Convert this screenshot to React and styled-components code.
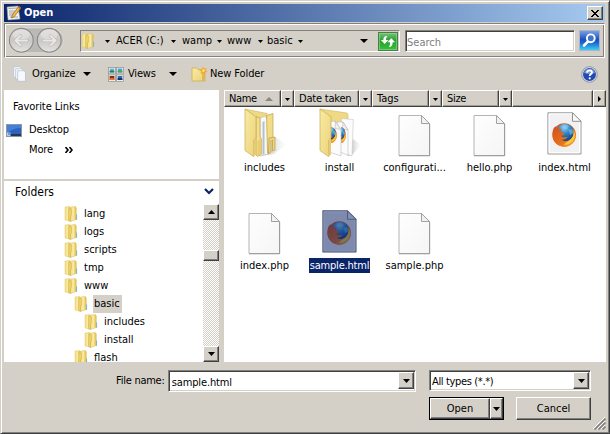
import React from "react";
import styled, { createGlobalStyle, css } from "styled-components";

const face = "#d4d0c8";

const Global = createGlobalStyle`
  * { box-sizing: border-box; }
  body { margin: 0; background: ${face}; overflow: hidden; }
  svg { display: block; flex: none; }
`;

const raised = css`
  background: ${face};
  color: #000;
  border: 1px solid;
  border-color: #fff #404040 #404040 #fff;
  box-shadow: inset -1px -1px 0 #808080;
`;
const sunken = css`
  border: 1px solid;
  border-color: #808080 #fff #fff #808080;
  box-shadow: inset 1px 1px 0 #404040, inset -1px -1px 0 ${face};
`;

const Window = styled.main`
  width: 610px;
  height: 434px;
  padding: 3px 3px 0 3px;
  display: flex;
  flex-direction: column;
  background: ${face};
  border: 1px solid;
  border-color: ${face} #404040 #404040 ${face};
  box-shadow: inset 1px 1px 0 #fff, inset -1px -1px 0 #808080;
  font: 11px/14px "DejaVu Sans Condensed", "DejaVu Sans", sans-serif;
  font-stretch: condensed;
  color: #000;
  white-space: nowrap;
`;

const Text = styled.span`
  flex: none;
  width: ${(p) => (p.$w ? `${p.$w}px` : "auto")};
  letter-spacing: ${(p) => p.$ls || 0}px;
`;

const TitleBar = styled.header`
  height: 18px;
  flex: none;
  display: flex;
  align-items: center;
  padding: 0 2px 0 2px;
  margin-right: 1px;
  background: linear-gradient(90deg, #0a246a, #a6caf0);
  color: #fff;
  font-weight: bold;
`;
const TitleText = styled(Text)`
  flex: 1;
  margin-left: 2px;
`;
const CloseButton = styled.button`
  ${raised}
  width: 16px;
  height: 14px;
  padding: 0;
  display: flex;
  align-items: center;
  justify-content: center;
`;

const NavBar = styled.nav`
  height: 35px;
  flex: none;
  margin-top: 1px;
  margin-right: 1px;
  display: flex;
  align-items: flex-start;
  padding: 6px 0 0 3px;
  border: 1px solid;
  border-color: #808080 #fff #fff #808080;
  box-shadow: inset 1px 1px 0 #fff, inset -1px -1px 0 #808080;
`;
const History = styled.div`
  margin-top: -3px;
`;
const Address = styled.div`
  width: 320px;
  height: 22px;
  margin-left: 16px;
  display: flex;
  align-items: center;
  border: 1px solid;
  border-color: #808080 #fff #fff #808080;
`;
const AddressIcon = styled.div`
  width: 24px;
  display: flex;
`;
const Crumb = styled.div`
  display: flex;
  align-items: center;
  width: ${(p) => p.$w}px;
`;
const Spacer = styled.div`
  flex: 1;
`;
const RefreshSlot = styled.div`
  margin-left: 10px;
  margin-right: 1px;
`;
const SearchBox = styled.div`
  ${sunken}
  width: 170px;
  height: 22px;
  margin-left: 5px;
  padding: 5px 1px;
  background: #fff;
  color: #808080;
`;
const SearchButton = styled.div`
  margin-left: 4px;
`;

const Toolbar = styled.div`
  height: 32px;
  flex: none;
  display: flex;
  align-items: center;
  padding: 0 8px 0 9px;
`;
const Tool = styled.div`
  display: flex;
  align-items: center;
  width: ${(p) => p.$w}px;
`;
const ToolIcon = styled.div`
  width: ${(p) => p.$w}px;
`;

const Content = styled.section`
  height: 272px;
  flex: none;
  display: flex;
  gap: 5px;
`;
const Sidebar = styled.aside`
  width: 215px;
  display: flex;
  flex-direction: column;
  gap: 2px;
`;
const Favorites = styled.div`
  height: 89px;
  padding: 10px 0 0 9px;
  background: #fff;
`;
const FavoriteHeading = styled.div`
  height: 20px;
`;
const FavoriteLink = styled.div`
  display: flex;
  align-items: center;
  height: 20px;
  margin-left: -7px;
`;
const LinkIcon = styled.div`
  width: 23px;
`;
const Folders = styled.div`
  height: 181px;
  display: flex;
  flex-direction: column;
  background: #fff;
`;
const FoldersHeader = styled.div`
  height: 23px;
  flex: none;
  padding: 0 5px 2px 11px;
  display: flex;
  align-items: center;
  justify-content: space-between;
  font-size: 12px;
`;
const TreeArea = styled.div`
  flex: 1;
  display: flex;
  min-height: 0;
`;
const Tree = styled.div`
  flex: 1;
  overflow: hidden;
  padding-top: 1px;
`;
const TreeRow = styled.div`
  height: 18px;
  display: flex;
  align-items: center;
  padding-left: ${(p) => 60 + p.$depth * 10}px;
`;
const TreeLabel = styled.span`
  height: 18px;
  line-height: 18px;
  margin-left: 4px;
  padding: 0 2px 0 1px;
  background: ${(p) => (p.$active ? face : "transparent")};
`;
const ScrollBar = styled.div`
  width: 16px;
  display: flex;
  flex-direction: column;
  background: repeating-conic-gradient(#fff 0 25%, ${face} 0 50%) 0 0 / 2px 2px;
`;
const ScrollButton = styled.button`
  ${raised}
  width: 16px;
  height: 16px;
  padding: 0;
  display: flex;
  align-items: center;
  justify-content: center;
`;
const Thumb = styled.div`
  ${raised}
  height: 11px;
  margin: 30px 0 85px;
`;

const FilePane = styled.div`
  width: 382px;
  background: #fff;
`;
const ColumnRow = styled.div`
  display: flex;
  height: 17px;
`;
const Column = styled.div`
  width: ${(p) => p.$w}px;
  display: flex;
  align-items: center;
  justify-content: ${(p) => (p.$center ? "center" : "flex-start")};
  padding-left: ${(p) => (p.$center ? 0 : 4)}px;
  padding-top: 1px;
  background: ${face};
  border: 1px solid;
  border-color: #fff #404040 #404040 #fff;
  box-shadow: inset -1px -1px 0 #a09c94;
`;
const FileGrid = styled.div`
  display: grid;
  grid-template-columns: repeat(5, 75px);
  grid-auto-rows: 98px;
  padding: 0 0 0 3px;
`;
const FileItem = styled.div`
  display: flex;
  flex-direction: column;
  align-items: center;
`;
const FileIcon = styled.div`
  height: 53px;
  display: flex;
  align-items: flex-end;
  padding-bottom: ${(p) => p.$lift}px;
`;
const FileLabel = styled.span`
  height: 15px;
  line-height: 15px;
  padding: 0 1px;
  letter-spacing: ${(p) => (p.$selected ? -0.2 : 0)}px;
  color: ${(p) => (p.$selected ? "#fff" : "#000")};
  background: ${(p) => (p.$selected ? "#0a246a" : "transparent")};
`;

const Footer = styled.footer`
  flex: 1;
  display: flex;
  padding-top: 8px;
`;
const NameLabel = styled.label`
  width: 164px;
  padding: 4px 0 0 112px;
  letter-spacing: -0.25px;
`;
const Combo = styled.div`
  ${sunken}
  width: ${(p) => p.$w}px;
  height: ${(p) => p.$h}px;
  display: flex;
  align-items: stretch;
  justify-content: space-between;
  padding: ${(p) => (p.$h > 21 ? "1px 1px 2px 3px" : "1px 1px 1px 2px")};
  background: #fff;
`;
const ComboText = styled(Text)`
  padding-top: ${(p) => p.$top || 3}px;
`;
const ComboButton = styled.button`
  ${raised}
  width: 16px;
  padding: 0;
  display: flex;
  align-items: center;
  justify-content: center;
`;
const Choices = styled.div`
  width: 162px;
  margin-left: 13px;
`;
const Buttons = styled.div`
  display: flex;
  justify-content: space-between;
  margin-top: 6px;
`;
const OpenButton = styled.div`
  width: 75px;
  height: 23px;
  display: flex;
  border: 1px solid #000;
`;
const OpenPart = styled.button`
  ${raised}
  width: ${(p) => p.$w}px;
  padding: 0;
  font: inherit;
  display: flex;
  align-items: center;
  justify-content: center;
`;
const CancelButton = styled.button`
  ${raised}
  width: 75px;
  height: 23px;
  padding: 0;
  font: inherit;
`;
const Grip = styled.div`
  margin: 47px 0 0 2px;
`;

const Arrow = ({ w = 7, h = 4, up, color = "#000" }) => (
  <svg width={w} height={h} viewBox={`0 0 ${w} ${h}`}>
    <path d={up ? `M0 ${h}H${w}L${w / 2} 0Z` : `M0 0H${w}L${w / 2} ${h}Z`} fill={color} />
  </svg>
);

const HiddenSvg = styled.svg`
  position: absolute;
`;

const Defs = () => (
  <HiddenSvg width="0" height="0">
    <defs>
      <linearGradient id="gold" x1="0" x2="1" y1="0" y2="0">
        <stop offset="0" stopColor="#f3dd80" />
        <stop offset=".5" stopColor="#f9eba2" />
        <stop offset="1" stopColor="#dcb849" />
      </linearGradient>
      <linearGradient id="flap" x1="0" x2="1" y1="0" y2="1">
        <stop offset="0" stopColor="#f8eba2" />
        <stop offset="1" stopColor="#ecd27a" />
      </linearGradient>
      <linearGradient id="paper" x1="0" x2="1" y1="0" y2="1">
        <stop offset="0" stopColor="#fefefe" />
        <stop offset="1" stopColor="#f5f5f5" />
      </linearGradient>
      <radialGradient id="globe" cx=".45" cy=".2" r=".8">
        <stop offset="0" stopColor="#8fd8f7" />
        <stop offset=".45" stopColor="#2e83c8" />
        <stop offset="1" stopColor="#123c7c" />
      </radialGradient>
      <linearGradient id="fox" x1="0" x2="1" y1="0" y2="1">
        <stop offset="0" stopColor="#cf4f1a" />
        <stop offset=".6" stopColor="#e8701c" />
        <stop offset="1" stopColor="#f8b62c" />
      </linearGradient>
      <linearGradient id="orb" x1="0" x2="0" y1="0" y2="1">
        <stop offset="0" stopColor="#dddcda" />
        <stop offset=".5" stopColor="#c9c8c5" />
        <stop offset="1" stopColor="#e4e3e0" />
      </linearGradient>
      <linearGradient id="green" x1="0" x2="0" y1="0" y2="1">
        <stop offset="0" stopColor="#7cc47c" />
        <stop offset=".45" stopColor="#27a02e" />
        <stop offset="1" stopColor="#35c43b" />
      </linearGradient>
      <linearGradient id="blue" x1="0" x2="0" y1="0" y2="1">
        <stop offset="0" stopColor="#7fa4e6" />
        <stop offset=".45" stopColor="#1c50c0" />
        <stop offset=".6" stopColor="#1766d2" />
        <stop offset="1" stopColor="#43d4f5" />
      </linearGradient>
      <linearGradient id="shade" x1="0" x2="1" y1="0" y2="0">
        <stop offset="0" stopColor="#777" stopOpacity=".65" />
        <stop offset="1" stopColor="#ccc" stopOpacity="0" />
      </linearGradient>
    </defs>
  </HiddenSvg>
);

const SmallFolder = () => (
  <svg width="15" height="16" viewBox="0 0 15 16">
    <path d="M1 1 5.5.6 6.5 2V15L1 14Z" fill="url(#gold)" stroke="#e0c76c" strokeWidth=".5" />
    <path d="M6.5 1 11.5.6 12.3 2V13.5L6.5 15.5Z" fill="url(#gold)" stroke="#dabd5c" strokeWidth=".5" />
    <path d="M4.7 2 7.5 3V9L6.5 10V15.5L4.5 14.8Z" fill="#ecd06c" stroke="#c9a845" strokeWidth=".4" />
    <path d="M12 8.5H13.1V13.5L12 14Z" fill="#86b6c8" />
  </svg>
);

const AppIcon = () => (
  <svg width="16" height="16" viewBox="0 0 16 16">
    <path d="M1 2 12 1 14 14 2 15Z" fill="#f2f2ee" stroke="#999" strokeWidth=".6" />
    <path d="M2.5 3.5 11 3M3 6H9M3 8H8M3 10H7M4 12H12" stroke="#9a9a9a" strokeWidth=".9" />
    <path d="M13 1 15 3 8 12 5.5 13 6.3 10Z" fill="#eabc45" stroke="#805b1c" strokeWidth=".6" />
    <path d="M13 1 15 3 14 4.3 12 2.3Z" fill="#b54" />
  </svg>
);

const HistoryIcon = () => (
  <svg width="56" height="27" viewBox="0 0 56 27">
    <rect x=".5" y=".8" width="55" height="25" rx="12.5" fill="#bbb9b5" stroke="#dddbd6" />
    {[13.3, 41.2].map((x) => (
      <g key={x}>
        <circle cx={x} cy="13.3" r="11.9" fill="url(#orb)" stroke="#8b8986" strokeWidth="1.1" />
        <ellipse cx={x} cy="7.5" rx="8.5" ry="4.8" fill="#e6e5e3" opacity=".6" />
      </g>
    ))}
    <g fill="none" strokeLinecap="round" strokeLinejoin="round">
      <path d="M19 13.5H8M12.5 8.8 7.5 13.5 12.5 18.2M35.5 13.5H47M42.5 8.8 47.5 13.5 42.5 18.2" stroke="#b9b8b5" strokeWidth="3.2" />
      <path d="M19 13.5H8M12.5 8.8 7.5 13.5 12.5 18.2M35.5 13.5H47M42.5 8.8 47.5 13.5 42.5 18.2" stroke="#e9e8e6" strokeWidth="2" />
    </g>
  </svg>
);

const RefreshIcon = () => (
  <svg width="20" height="19" viewBox="0 0 20 19">
    <rect x=".5" y=".5" width="19" height="18" fill="url(#green)" stroke="#4b7d4b" />
    <rect x="1.5" y="1.5" width="17" height="16" fill="none" stroke="#9bd69b" strokeOpacity=".6" />
    <path d="M9.5 4C6.8 3.8 5.3 5 5.3 8H2.8L6.7 12 10.5 8H8C8 6.2 8.3 5.2 9.5 4ZM10.8 15C13.5 15 14.7 13.5 14.7 10.3H17.2L13.3 6.3 9.5 10.3H12C12 12.5 12 13.8 10.8 15Z" fill="#fff" />
  </svg>
);

const SearchIcon = () => (
  <svg width="21" height="21" viewBox="0 0 21 21">
    <rect x=".5" y=".5" width="20" height="20" fill="url(#blue)" stroke="#a9b5c9" />
    <path d="M5 15.5 9 11.5" stroke="#fff" strokeWidth="2.6" strokeLinecap="round" />
    <circle cx="11.8" cy="8.3" r="3.9" fill="#3f74cf" stroke="#fff" strokeWidth="1.9" />
  </svg>
);

const OrganizeIcon = () => (
  <svg width="15" height="16" viewBox="0 0 15 16">
    {[0, 2, 4].map((d) => (
      <path key={d} d={`M${0.7 + d} ${0.7 + d}H${7 + d}L${8.5 + d} ${2.2 + d}V${11.3 + d}H${0.7 + d}Z`} fill="#f7f9fb" stroke="#adbdce" strokeWidth=".7" />
    ))}
  </svg>
);

const ViewsIcon = () => (
  <svg width="16" height="15" viewBox="0 0 16 15">
    {[[0, 0, "#57b9dc", "#2f7d44"], [8, 0, "#4a9fdd", "#4faa37"], [0, 7.5, "#8d2219", "#df7b30"], [8, 7.5, "#3568b8", "#123268"]].map(([x, y, a, b]) => (
      <g key={`${x}-${y}`}>
        <rect x={x + 0.5} y={y + 0.5} width="7" height="6.3" fill="#fff" stroke="#8c8c8c" strokeWidth=".7" />
        <rect x={x + 1.6} y={y + 1.5} width="4.8" height="4.1" fill={a} />
        <path d={`M${x + 1.6} ${y + 5.6}V${y + 4}L${x + 4} ${y + 3.3} ${x + 6.4} ${y + 4.2}V${y + 5.6}Z`} fill={b} />
      </g>
    ))}
  </svg>
);

const NewFolderIcon = () => (
  <svg width="17" height="16" viewBox="0 0 17 16">
    <path d="M1 2H6L7 3.5H14V15H1Z" fill="url(#flap)" stroke="#d1ad48" strokeWidth=".8" />
    <path d="M11 6H14V15H11Z" fill="#dcb956" />
    <path d="M12 0 13 2.7 16 1.7 14.5 4.3 17 6 14 6.3 13.5 9 12 6.8 9.5 8 10.3 5.5 8 4.3 10.7 3.5Z" fill="#f5a832" />
    <circle cx="12.4" cy="4.6" r="1.3" fill="#ffe481" />
  </svg>
);

const HelpIcon = () => (
  <svg width="17" height="17" viewBox="0 0 17 17">
    <circle cx="8.5" cy="8.5" r="7.8" fill="#d7deeb" stroke="#7f8795" strokeWidth=".8" />
    <circle cx="8.5" cy="8.5" r="6.5" fill="#2549ae" />
    <path d="M3 7A5.7 5.7 0 0 1 14 7Q8.5 9 3 7Z" fill="#7592d6" />
    <path d="M6 6.8Q6.2 4.4 8.6 4.4 11 4.5 11 6.5C11 8 8.7 8.2 8.7 10" fill="none" stroke="#fff" strokeWidth="1.8" />
    <circle cx="8.7" cy="12.3" r="1.1" fill="#fff" />
  </svg>
);

const DesktopIcon = () => (
  <svg width="16" height="13" viewBox="0 0 16 13">
    <rect x=".5" y=".5" width="15" height="12" fill="#2d63bd" stroke="#8a97a8" />
    <path d="M1 1H15V4Q7 4 1 9Z" fill="#4580d8" />
    <rect x="1" y="10" width="14" height="2" fill="#26374f" />
    <path d="M1 8.5H4.5V12H1Z" fill="#b8d2e8" />
    <path d="M1.8 11.2 3.6 9.5M2.4 9.3H3.8V10.6" stroke="#2b6db0" strokeWidth=".7" fill="none" />
  </svg>
);

const Firefox = ({ x = 0, y = 0 }) => (
  <g transform={`translate(${x} ${y})`}>
    <circle cx="12" cy="12" r="11.7" fill="url(#fox)" />
    <circle cx="12.8" cy="9.8" r="9" fill="url(#globe)" />
    <path d="M10 3Q13 1 16 3L15 6 11 6ZM16 7 20 6 21 10 18 12Z" fill="#86cbed" opacity=".55" />
    <path d="M1.2 5.5 3 3.2 5 5.8 9.5 6 8 8.2 12 10.3 11 12.3 8.5 12.8Q10.5 15.2 15.5 13.8 13.5 17 9.5 16.8 13 19.5 18 16.5 22 13.5 21.5 6.5 24.8 12 22.5 17.5 18.5 24 11.5 23.8 4 23 .8 16.5-.8 10.5 1.2 5.5Z" fill="url(#fox)" />
    <path d="M21.3 6.5Q22 13.5 17.8 16.8 14 19.6 11.5 21.5 17 22.5 20.8 18 24.2 13 21.3 6.5Z" fill="#fbc63c" />
  </g>
);

const DocumentIcon = () => (
  <svg width="33" height="43" viewBox="0 0 33 43">
    <path d="M1 1.5H23.5L31.5 9.5V41.5H1Z" fill="url(#paper)" stroke="#b4b4b4" />
    <path d="M31.7 10V41.8H1" fill="none" stroke="#8f8f8f" strokeWidth=".8" />
    <path d="M23.5 1.5V9.5H31.5Z" fill="#f1f1f1" stroke="#999" strokeWidth=".9" />
  </svg>
);

const HtmlIcon = ({ selected }) => (
  <svg width="35" height="43" viewBox="0 0 35 43">
    <path d="M.9.8H25.5L34 9.3V42H.9Z" fill="#f1f1f3" stroke="#999" />
    <path d="M2.2 2H24.8L32.7 10.2V40.7H2.2Z" fill="none" stroke="#fff" />
    <path d="M25.5.8V9.3H34Z" fill="#fafafa" stroke="#888" strokeWidth=".9" />
    <Firefox x={5.3} y={11} />
    {selected && <path d="M.4.3H25.7L34.5 9V42.5H.4Z" fill="#0a246a" opacity=".5" />}
  </svg>
);

const FrontFlap = () => (
  <>
    <path d="M3 1 14 8.7V30L11.7 32V48.7L3 42.5Z" fill="url(#flap)" stroke="#c9ac55" strokeWidth=".7" />
    <path d="M11.7 32 14 30.5V46.5L11.7 48.7Z" fill="#e5cb76" />
  </>
);

const FilesFolderIcon = () => (
  <svg width="46" height="50" viewBox="0 0 46 50">
    <path d="M17 48 32 46 45 36 33 29Z" fill="url(#shade)" />
    <path d="M3 1 25 5.5V42H14Z" fill="#f0d985" stroke="#d0b562" strokeWidth=".6" />
    <path d="M18 10 23 8 26 12V46L18 48Z" fill="#f7f8f8" stroke="#b9b9b9" strokeWidth=".6" />
    <path d="M20.5 14 22.5 13V46L20.5 47Z" fill="#b4c2c8" />
    <path d="M24.5 7.5 31 5.5V31L27.5 32V43L25.5 45Z" fill="#f1dc88" stroke="#c0a044" strokeWidth=".7" />
    <path d="M27 30 33 29V42L30.5 43V32L29 33V44L26.5 46Z" fill="#edd57c" stroke="#b99843" strokeWidth=".7" />
    <path d="M14 8.5 18 10V29L19.5 31V46L15.5 48.5 14 47Z" fill="#f3df8d" stroke="#c0a044" strokeWidth=".7" />
    <path d="M15.5 33 19.5 30.5V46L15.5 48.5Z" fill="#e8cd76" />
    <FrontFlap />
  </svg>
);

const WebFolderIcon = () => (
  <svg width="46" height="50" viewBox="0 0 46 50">
    <path d="M31 48 36 46 44 37 36 31Z" fill="url(#shade)" />
    <path d="M3 1 30 5Q31 6 31 8V44H12Z" fill="#f0d985" stroke="#d0b562" strokeWidth=".6" />
    <path d="M24.5 10.5 36.3 11.5 35 48 24.5 44Z" fill="#fcfcfc" stroke="#c4c4c4" strokeWidth=".6" />
    <path d="M20 14 26 14 31 22V47.5L21 43Z" fill="#fbfbfb" stroke="#bdbdbd" strokeWidth=".6" />
    <path d="M26 14 25.5 21 31 22Z" fill="#efefef" stroke="#aaa" strokeWidth=".5" />
    <svg x="24" y="19" width="5" height="16" viewBox="12 0 12 24" preserveAspectRatio="none"><Firefox /></svg>
    <path d="M12 13 18.5 13.5 24 21.5V48L12 44Z" fill="#fbfbfb" stroke="#bdbdbd" strokeWidth=".6" />
    <path d="M18.5 13.5 18 20.5 24 21.5Z" fill="#efefef" stroke="#aaa" strokeWidth=".5" />
    <svg x="14" y="19" width="6" height="16" viewBox="12 0 12 24" preserveAspectRatio="none"><Firefox /></svg>
    <FrontFlap />
  </svg>
);

const icons = {
  doc: { art: <DocumentIcon />, lift: 3 },
  html: { art: <HtmlIcon />, lift: 5 },
  selected: { art: <HtmlIcon selected />, lift: 5 },
  files: { art: <FilesFolderIcon />, lift: 2 },
  web: { art: <WebFolderIcon />, lift: 2 },
};

const crumbs = [
  { name: "ACER (C:)", w: 66, text: 55 },
  { name: "wamp", w: 45, text: 35 },
  { name: "www", w: 40, text: 31 },
  { name: "basic", w: 40, text: 31 },
];
const tree = [
  ["lang", 0], ["logs", 0], ["scripts", 0], ["tmp", 0], ["www", 0],
  ["basic", 1], ["includes", 2], ["install", 2], ["flash", 1],
];
const files = [
  ["includes", "files"], ["install", "web"], ["configurati...", "doc"], ["hello.php", "doc"], ["index.html", "html"],
  ["index.php", "doc"], ["sample.html", "selected"], ["sample.php", "doc"],
];

export default function App() {
  return (
    <>
      <Global />
      <Defs />
      <Window>
        <TitleBar>
          <AppIcon />
          <TitleText>Open</TitleText>
          <CloseButton aria-label="Close">
            <svg width="8" height="7" viewBox="0 0 8 7" shapeRendering="crispEdges">
              <path d="M0 0H2V1H3V2H5V1H6V0H8V1H7V2H6V3H5V4H6V5H7V6H8V7H6V6H5V5H3V6H2V7H0V6H1V5H2V4H3V3H2V2H1V1H0Z" />
            </svg>
          </CloseButton>
        </TitleBar>
        <NavBar>
          <History><HistoryIcon /></History>
          <Address>
            <AddressIcon><SmallFolder /></AddressIcon>
            <Crumb $w={11}><Arrow w={5} h={3} /></Crumb>
            {crumbs.map((c) => (
              <Crumb key={c.name} $w={c.w}>
                <Text $w={c.text}>{c.name}</Text>
                <Arrow w={5} h={3} />
              </Crumb>
            ))}
            <Spacer />
            <Arrow w={8} h={4} />
            <RefreshSlot><RefreshIcon /></RefreshSlot>
          </Address>
          <SearchBox><Text>Search</Text></SearchBox>
          <SearchButton><SearchIcon /></SearchButton>
        </NavBar>
        <Toolbar>
          <Tool $w={95}>
            <ToolIcon $w={19}><OrganizeIcon /></ToolIcon>
            <Text $w={51} $ls={-0.1}>Organize</Text>
            <Arrow w={8} />
          </Tool>
          <Tool $w={83}>
            <ToolIcon $w={20}><ViewsIcon /></ToolIcon>
            <Text $w={41} $ls={-0.2}>Views</Text>
            <Arrow w={8} />
          </Tool>
          <Tool $w={90}>
            <ToolIcon $w={19}><NewFolderIcon /></ToolIcon>
            <Text $ls={-0.1}>New Folder</Text>
          </Tool>
          <Spacer />
          <HelpIcon />
        </Toolbar>
        <Content>
          <Sidebar>
            <Favorites>
              <FavoriteHeading><Text $ls={-0.1}>Favorite Links</Text></FavoriteHeading>
              <FavoriteLink>
                <LinkIcon><DesktopIcon /></LinkIcon>
                <Text $ls={-0.15}>Desktop</Text>
              </FavoriteLink>
              <FavoriteLink>
                <LinkIcon />
                <Text $w={36} $ls={-0.15}>More</Text>
                <svg width="8" height="6" viewBox="0 0 8 6"><path d="M.5 0 3 3 .5 6M4.5 0 7 3 4.5 6" fill="none" stroke="#000" strokeWidth="1.6" /></svg>
              </FavoriteLink>
            </Favorites>
            <Folders>
              <FoldersHeader>
                <Text>Folders</Text>
                <svg width="10" height="7" viewBox="0 0 10 7"><path d="M1 1 5 5 9 1" fill="none" stroke="#0a246a" strokeWidth="2.2" /></svg>
              </FoldersHeader>
              <TreeArea>
                <Tree>
                  {tree.map(([name, depth]) => (
                    <TreeRow key={name} $depth={depth}>
                      <SmallFolder />
                      <TreeLabel $active={name === "basic"}>{name}</TreeLabel>
                    </TreeRow>
                  ))}
                </Tree>
                <ScrollBar>
                  <ScrollButton aria-label="Scroll up"><Arrow up /></ScrollButton>
                  <Thumb />
                  <ScrollButton aria-label="Scroll down"><Arrow /></ScrollButton>
                </ScrollBar>
              </TreeArea>
            </Folders>
          </Sidebar>
          <FilePane>
            <ColumnRow>
              <Column $w={57}><Text $w={36} $ls={-0.4}>Name</Text><Arrow w={8} h={4} up color="#8b8882" /></Column>
              <Column $w={13} $center><Arrow w={5} h={3} /></Column>
              <Column $w={65}><Text $ls={-0.2}>Date taken</Text></Column>
              <Column $w={13} $center><Arrow w={5} h={3} /></Column>
              <Column $w={57}><Text>Tags</Text></Column>
              <Column $w={13} $center><Arrow w={5} h={3} /></Column>
              <Column $w={57}><Text $ls={-0.3}>Size</Text></Column>
              <Column $w={13} $center><Arrow w={5} h={3} /></Column>
              <Column $w={81} />
              <Column $w={13} $center><svg width="3" height="6" viewBox="0 0 3 6"><path d="M0 0 3 3 0 6Z" /></svg></Column>
            </ColumnRow>
            <FileGrid>
              {files.map(([name, kind]) => (
                <FileItem key={name}>
                  <FileIcon $lift={icons[kind].lift}>{icons[kind].art}</FileIcon>
                  <FileLabel $selected={kind === "selected"}>{name}</FileLabel>
                </FileItem>
              ))}
            </FileGrid>
          </FilePane>
        </Content>
        <Footer>
          <NameLabel>File name:</NameLabel>
          <Combo $w={249} $h={22}>
            <ComboText $ls={-0.15} $top={4}>sample.html</ComboText>
            <ComboButton aria-label="Recent names"><Arrow /></ComboButton>
          </Combo>
          <Choices>
            <Combo $w={162} $h={21}>
              <ComboText $ls={-0.35}>All types (*.*)</ComboText>
              <ComboButton aria-label="File types"><Arrow /></ComboButton>
            </Combo>
            <Buttons>
              <OpenButton>
                <OpenPart $w={60}><Text>Open</Text></OpenPart>
                <OpenPart $w={13} aria-label="Open options"><Arrow w={7} h={4} /></OpenPart>
              </OpenButton>
              <CancelButton><Text>Cancel</Text></CancelButton>
            </Buttons>
          </Choices>
          <Grip>
            <svg width="13" height="13" viewBox="0 0 13 13">
              <path d="M0 12 12 0M4 12 12 4M8 12 12 8" stroke="#fff" strokeWidth="1" />
              <path d="M1.5 12.5 12.5 1.5M5.5 12.5 12.5 5.5M9.5 12.5 12.5 9.5" stroke="#808080" strokeWidth="1.6" />
            </svg>
          </Grip>
        </Footer>
      </Window>
    </>
  );
}
